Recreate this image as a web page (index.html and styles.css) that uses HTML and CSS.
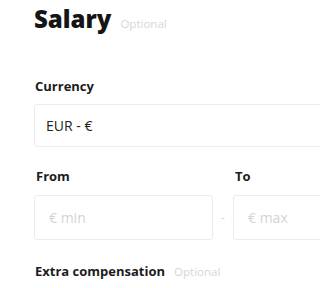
FILE: index.html
```html
<!DOCTYPE html>
<html>
<head>
<meta charset="utf-8">
<link rel="stylesheet" href="styles.css">
</head>
<body>
<div class="form">
  <h1 class="title">Salary<span class="optional">Optional</span></h1>
  <div class="field">
    <div class="label">Currency</div>
    <div class="select">EUR - €</div>
  </div>
  <div class="range">
    <div class="col">
      <div class="label">From</div>
      <div class="input">€ min</div>
    </div>
    <div class="sep">-</div>
    <div class="col">
      <div class="label">To</div>
      <div class="input">€ max</div>
    </div>
  </div>
  <div class="label extra">Extra compensation<span class="optional">Optional</span></div>
</div>
</body>
</html>
```
FILE: styles.css
```css
html, body {
  margin: 0;
  padding: 0;
  overflow: hidden;
  background: #ffffff;
}
body {
  font-family: "Open Sans", "Noto Sans", sans-serif;
  color: #1c1c1c;
}
.form {
  width: 378px;
  padding: 3px 0 0 34px;
}
.title {
  margin: 0;
  font-size: 24px;
  line-height: 32px;
  font-weight: 800;
  color: #151515;
}
.optional {
  margin-left: 9px;
  font-size: 11.5px;
  font-weight: 400;
  color: #d6d6d6;
}
.field {
  margin-top: 37px;
}
.label {
  font-size: 13px;
  line-height: 18px;
  font-weight: 700;
  padding-left: 1px;
  color: #1c1c1c;
}
.select {
  margin-top: 9px;
  box-sizing: border-box;
  height: 43px;
  border: 1px solid #ececec;
  border-radius: 3px;
  display: flex;
  align-items: center;
  padding: 0 0 1px 11px;
  font-size: 14px;
  color: #222;
}
.range {
  margin-top: 20px;
  display: flex;
  align-items: flex-end;
}
.col {
  width: 179px;
  display: flex;
  flex-direction: column;
}
.col .label {
  padding-left: 2px;
}
.input {
  margin-top: 10px;
  box-sizing: border-box;
  height: 45px;
  border: 1px solid #ececec;
  border-radius: 3px;
  display: flex;
  align-items: center;
  padding: 0 0 0 14px;
  font-size: 14px;
  color: #d4d4d4;
}
.sep {
  width: 20px;
  height: 45px;
  display: flex;
  align-items: center;
  justify-content: center;
  font-size: 12px;
  color: #d8d8d8;
}
.extra {
  margin-top: 22px;
}
```
